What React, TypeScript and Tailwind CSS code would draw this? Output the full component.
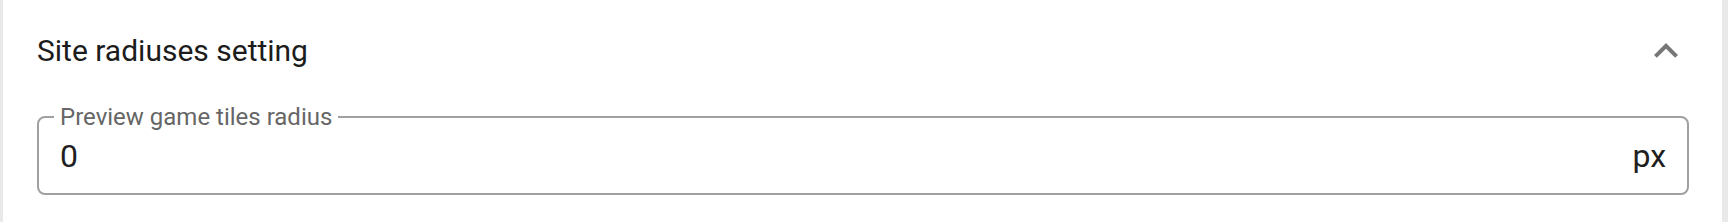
import React from "react";

export default function App() {
  return (
    <div
      className="w-[1728px] h-[222px] bg-[#e9e9e9] pl-[3px] pr-[6px] overflow-hidden"
      style={{ fontFamily: "Roboto, 'Noto Sans', Arial, sans-serif" }}
    >
      <div className="h-full bg-white pl-[34px] pr-[33px] pt-[27px]">
        <div className="flex items-center justify-between h-[48px]">
          <span className="text-[30px] leading-[42px] text-[#1c1c1c] font-normal">
            Site radiuses setting
          </span>
          <svg
            width="48"
            height="48"
            viewBox="0 0 24 24"
            className="block -mr-[1px]"
            fill="#777777"
          >
            <path d="M12 8l-6 6 1.41 1.41L12 10.83l4.59 4.58L18 14z" />
          </svg>
        </div>
        <div className="mt-[41px] relative h-[79px] border-2 border-[#a0a0a0] rounded-[8px] flex items-center pl-[21px] pr-[21px]">
          <span className="absolute left-[15px] -top-[13px] bg-white px-[6px] text-[24px] leading-[24px] text-[#666666] whitespace-nowrap">
            Preview game tiles radius
          </span>
          <span className="flex-1 text-[32px] leading-[40px] text-[#1f1f1f]">0</span>
          <span className="text-[32px] leading-[40px] text-[#1f1f1f]">px</span>
        </div>
      </div>
    </div>
  );
}
